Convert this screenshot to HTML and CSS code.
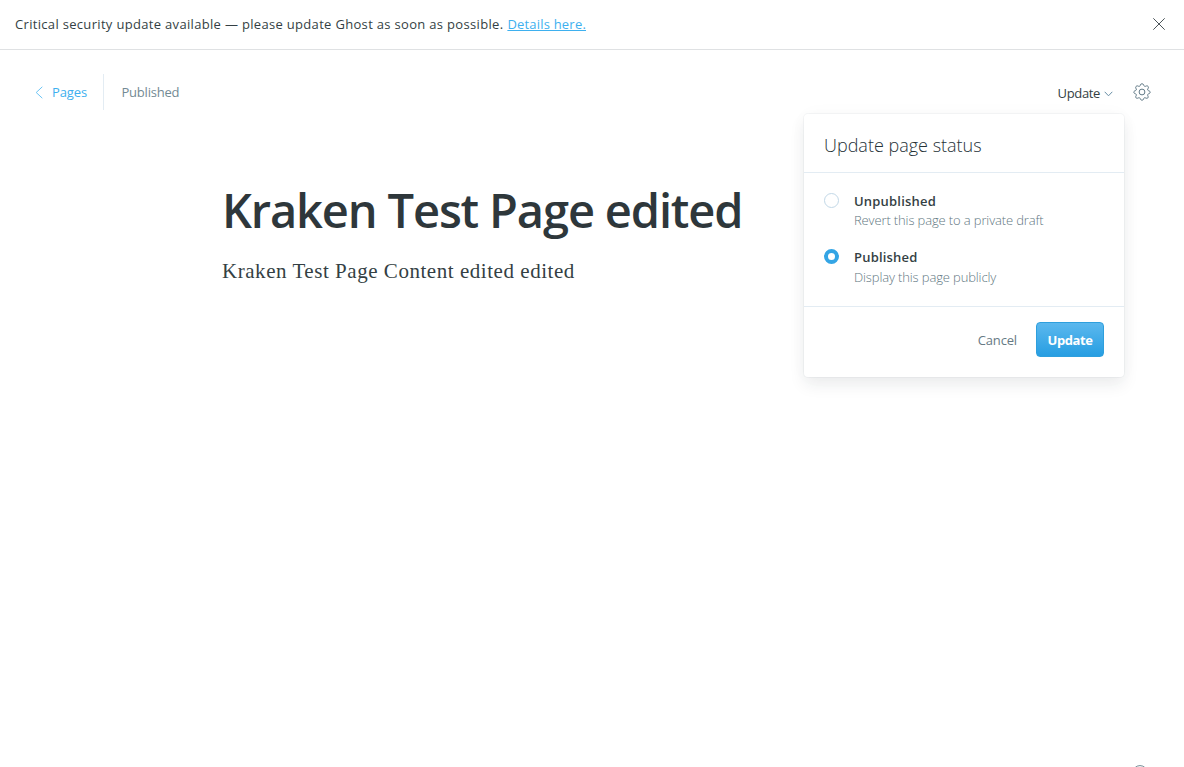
FILE: index.html
```html
<!DOCTYPE html>
<html lang="en">
<head>
<meta charset="utf-8">
<title>Kraken Test Page edited</title>
<link rel="stylesheet" href="styles.css">
</head>
<body>
<aside class="alert">
  <p class="alert-text"><span class="alert-message">Critical security update available — please update Ghost as soon as possible.</span><a class="alert-link" href="#">Details here.</a></p>
  <button class="alert-close" aria-label="Close"><svg width="14" height="14" viewBox="0 0 14 14"><path d="M1.3 1.3l11.4 11.4M12.7 1.3L1.3 12.7"/></svg></button>
</aside>
<header class="editor-header">
  <a class="back" href="#"><svg width="8" height="13" viewBox="0 0 8 13"><path d="M7.3.8L1.2 6.5l6.1 5.7"/></svg><span class="back-label">Pages</span></a>
  <span class="status">Published</span>
  <div class="actions">
    <button class="update-trigger"><span>Update</span><svg width="9" height="6" viewBox="0 0 9 6"><path d="M.7.8l3.8 4 3.8-4"/></svg></button>
    <button class="settings" aria-label="Settings"><svg width="18" height="18" viewBox="0 0 18 18"><path d="M7.3 1.8Q7.7.8 9 .8t1.7 1l.3.9q.4 1 1.5.6l1-.4q.9-.3 1.6.5t.1 1.8l-.5 1q-.4 1 .6 1.4l.9.3q1 .4 1 1.3t-1 1.4l-.9.4q-1 .4-.6 1.4l.4 1q.4.8-.3 1.5t-1.6.3l-1-.4q-1-.4-1.4.6l-.3.9q-.4.9-1.5.9t-1.5-.9l-.4-.9q-.4-1-1.4-.6l-1 .4q-.9.4-1.6-.3t-.3-1.600l.5-1q.4-1-.7-1.400l-.9-.4Q.8 10.100.8 9.200t1-1.400l.9-.3q1-.4.600-1.400l-.5-1q-.4-.9.300-1.700t1.600-.5l1 .4q1 .4 1.400-.600z"/><circle cx="9" cy="9" r="2.900"/></svg></button>
  </div>
  <section class="menu">
    <h2 class="menu-title">Update page status</h2>
    <div class="options">
      <label class="option"><span class="radio"></span><span class="option-text"><strong class="option-name">Unpublished</strong><span class="option-note">Revert this page to a private draft</span></span></label>
      <label class="option option-selected"><span class="radio radio-on"></span><span class="option-text"><strong class="option-name">Published</strong><span class="option-note">Display this page publicly</span></span></label>
    </div>
    <footer class="menu-footer"><button class="cancel">Cancel</button><button class="confirm">Update</button></footer>
  </section>
</header>
<main class="editor">
  <h1 class="page-title">Kraken Test Page edited</h1>
  <p class="page-body">Kraken Test Page Content edited edited</p>
</main>
<div class="help"><svg width="16" height="16" viewBox="0 0 16 16"><circle cx="8" cy="8" r="7.400"/></svg></div>
</body>
</html>
```
FILE: styles.css
```css
* { box-sizing: border-box; }
body { margin: 0; height: 767px; overflow: hidden; display: flex; flex-direction: column; background: #fff; color: #343f44; font: 13px/20px "Open Sans", "Noto Sans", sans-serif; }
button { border: 0; padding: 0; background: none; font: inherit; color: inherit; }
svg { display: block; fill: none; stroke: currentColor; }
a { color: #3eb0ef; }
h1, h2, p { margin: 0; }
.alert { flex: none; height: 50px; display: flex; align-items: center; justify-content: space-between; padding: 0 18px 1px 15px; border-bottom: 1px solid #dfe1e3; }
.alert-text { white-space: nowrap; letter-spacing: .32px; }
.alert-link { margin-left: 4px; letter-spacing: .2px; }
.alert-close { color: #4b5459; }
.editor-header { flex: none; position: relative; display: flex; align-items: center; height: 36px; margin-top: 24px; padding: 0 33px 0 35px; }
.back { display: flex; align-items: center; width: 69px; height: 36px; border-right: 1px solid #e3ecf3; text-decoration: none; letter-spacing: -.1px; }
.back svg { width: 8px; margin-right: 9px; color: #6cc4f4; }
.status { margin-left: 17.5px; color: #738a94; letter-spacing: -.22px; }
.actions { margin-left: auto; display: flex; align-items: center; }
.update-trigger { display: flex; align-items: center; padding-top: 2px; letter-spacing: -.35px; }
.update-trigger svg { margin: 1px 20px 0 4px; color: #688ea5; }
.settings { color: #627a87; }
.menu { position: absolute; z-index: 1; top: 40px; left: 804px; width: 320px; height: 263px; background: #fff; border-radius: 4px; box-shadow: 0 0 0 1px rgba(99,114,130,.06), 0 8px 16px rgba(27,39,51,.08), 0 0 20px rgba(27,39,51,.025); }
.menu-title { height: 59px; padding: 19px 20px 0; border-bottom: 1px solid #e3ecf3; font-size: 18px; line-height: 24px; font-weight: 300; color: #263238; }
.options { height: 134px; padding: 19px 20px 0; display: flex; flex-direction: column; gap: 18px; border-bottom: 1px solid #e3ecf3; }
.option { display: flex; }
.radio { flex: none; width: 15px; height: 15px; margin: 1px 15px 0 0; border: 1px solid #c2d8e7; border-radius: 50%; }
.radio-on { border: 4px solid #34a5e5; }
.option-text { display: flex; flex-direction: column; }
.option-name { line-height: 19px; font-weight: 600; letter-spacing: .2px; }
.option-note { line-height: 19px; font-weight: 300; color: #5f7782; letter-spacing: -.13px; }
.option-selected .option-note { line-height: 21px; }
.menu-footer { display: flex; justify-content: flex-end; gap: 19px; padding: 15px 20px; }
.cancel { color: #667a84; letter-spacing: -.15px; }
.confirm { width: 68px; height: 35px; border: 1px solid #2e9fdd; border-radius: 4px; background: linear-gradient(#5bb8ee, #279ee2); color: #fff; font-weight: 700; letter-spacing: -.45px; }
.editor { margin: 70px 0 0 222px; }
.page-title { font-size: 47px; line-height: 60px; font-weight: 600; letter-spacing: -1.15px; color: #2e373b; }
.page-body { margin-top: 16px; font: 21px/30px "Liberation Serif", serif; letter-spacing: .54px; }
.help { flex: none; width: 16px; margin: auto 36px -14px auto; color: #738a94; }
```
